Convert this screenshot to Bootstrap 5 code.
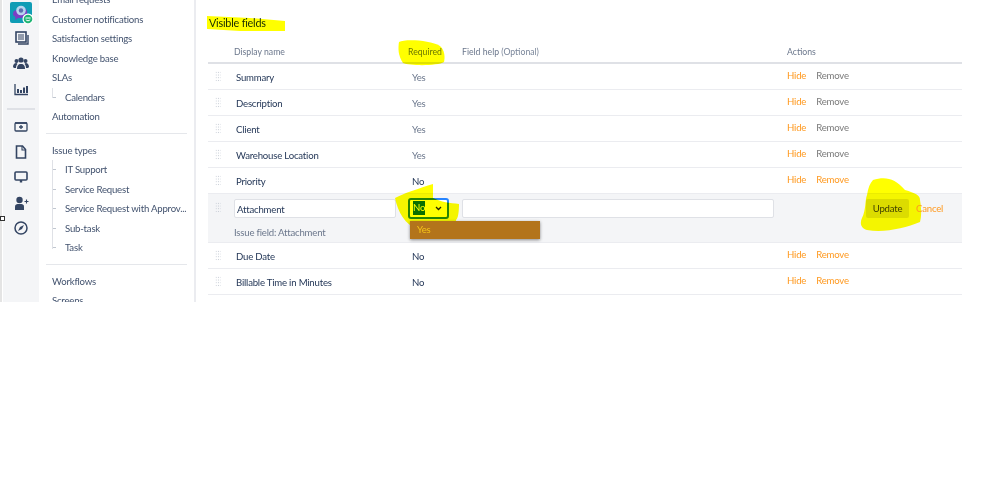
<!DOCTYPE html>
<html lang="en"><head><meta charset="utf-8"><title>Visible fields</title>
<link href="https://cdn.jsdelivr.net/npm/bootstrap@5.3.0/dist/css/bootstrap.min.css" rel="stylesheet">
<style>
html,body{background:#fff;margin:0}
body{font-family:Lato,"Noto Sans",sans-serif;font-size:9.6px;letter-spacing:-.2px;color:#172b4d;overflow:hidden}
.app-frame{height:302px;overflow:hidden;position:relative;padding-left:1px;border-left:2px solid #e4e4e4}
.rail{width:36px;background:#f4f5f7;flex:none;color:#344563;padding-top:2px}
.rail-logo{width:22px;height:22px;position:relative;flex:none;margin-bottom:6px}
.rail-ico{width:16px;height:16px;display:block;margin-bottom:9.3px;flex:none}
.rail-sep{width:28px;height:2px;background:#dfe1e6;margin:2px 0 9px}
.side-nav{width:157px;flex:none;border-right:2px solid #ebecf0;margin-top:-10px;padding:0 7px 0 13px}
.nav-line{height:19.5px;line-height:19.5px;color:#42526e;white-space:nowrap}
.nav-sub{padding-left:13px;position:relative;white-space:nowrap}
.nav-sub::before{content:"";position:absolute;left:0;top:9px;width:4px;height:1px;background:#c1c7d0}
.nav-tree{position:relative}
.nav-tree::after{content:"";position:absolute;left:0;top:0;bottom:9px;width:1px;background:#dfe1e6}
.nav-rule{height:1px;background:#e5e7eb;margin:6.500px 0 6.500px -6px}
.main-area{flex:1;padding:0 37px 0 12px;min-width:0}
.page-title{font-size:10.8px;line-height:16px;margin:15px 0 12px 1px;font-weight:400;color:#172b4d}
.field-table{table-layout:fixed;width:754px;margin:0;border-collapse:collapse}
.field-table th{font-size:8.7px;font-weight:400;letter-spacing:0;color:#6b778c;height:20px;padding:0 0 4px;line-height:12px;border-bottom:2px solid #dfe1e6;background:none}
.field-table td{height:26px;padding:4px 0 0;border-bottom:1.6px solid #ebecf0;font-size:9.6px;vertical-align:middle;background:none;color:#253858}
.w-drag{width:26px}.w-name{width:174px}.w-req{width:54px}.w-help{width:325px}
.name-cell{padding-left:2px!important}
.soft{color:#6b778c!important}
.opt-note{color:#7a869a}
.grip{display:block;width:6px;height:11px;margin-left:7px;margin-top:-4px;background-image:radial-gradient(#c1c7d0 .7px,transparent .8px);background-size:2.4px 2.7px}
.act-hide{color:#ff991f;margin-right:10px}
.act-remove{color:#7a7a7a}
.act-orange{color:#ff991f}
.row-acts{padding-top:0!important}
.edit-row td{background:#f4f5f7;height:49px;vertical-align:top;padding-top:5px}
.edit-row .grip{margin-top:3px}
.name-input{width:162px;height:19px;background:#fff;border:1px solid #dfe1e6;border-radius:2px;padding:0 2px;line-height:19px;color:#253858}
.help-input{width:312px;height:19px;background:#fff;border:1px solid #dfe1e6;border-radius:2px}
.issue-note{color:#6b778c;margin-top:8px;line-height:13px}
.fake-select{width:41px;height:21px;border:2px solid #2684ff;border-radius:3px;background:#fff;padding-left:3px;line-height:14px;position:relative;margin-top:-1px}
.sel-no{background:#0a6ed1;color:#fff;display:inline-block;height:14px;width:12px;text-align:center;margin-top:1px}
.sel-caret{position:absolute;right:5px;top:6px;width:7px;height:5px}
.drop-list{position:absolute;left:408px;top:221px;width:130px;height:18px;background:#b3741b;color:#f5c518;box-shadow:0 1px 3px rgba(0,0,0,.45);padding-left:7px;line-height:18px;z-index:3}
.btn-update{position:absolute;left:864px;top:199px;width:43px;height:19px;background:#dcdc00;border-radius:2px;color:#414100;text-align:center;line-height:20px;z-index:1}
.act-cancel{position:absolute;left:914px;top:199px;line-height:20px;color:#ff991f;z-index:3}
.marker-layer{position:absolute;left:-2px;top:0;width:999px;height:488px;mix-blend-mode:multiply;z-index:2;pointer-events:none}
.side-pin{position:absolute;left:0;top:216px;width:5px;height:5px;border:1px solid #333;background:#fff;z-index:3}
</style></head>
<body>
<div class="app-frame d-flex">
  <div class="rail d-flex flex-column align-items-center">
    <div class="rail-logo">
      <svg width="26" height="24" viewBox="0 0 26 24"><rect width="22" height="21" rx="2" fill="#0f9cb5"/><path d="M3 12c0-3 2-4 4-4 2-3 9-3 10 1 1 4-2 7-6 7H8l-3 2 .5-3C4 14 3 13.500 3 12z" fill="#7b3fc4"/><circle cx="11" cy="8.500" r="4.800" fill="#b7d6ee"/><circle cx="11" cy="8.500" r="2.200" fill="#5a6fb0"/><circle cx="18" cy="17" r="5.500" fill="#fff"/><circle cx="18" cy="17" r="4.300" fill="#1fb574"/><path d="M15.500 16h5" stroke="#fff" stroke-width="1"/><path d="M15.800 17.500c1 1.700 3.400 1.700 4.400 0" fill="none" stroke="#fff" stroke-width="1"/></svg>
    </div>
    <svg class="rail-ico" viewBox="0 0 16 16" fill="none" stroke="#344563"><rect x="3" y="2" width="10" height="10" stroke-width="1.6"/><path d="M5 5h6M5 7h6M5 9h6" stroke-width="1"/><path d="M15 5v9H5" stroke-width="1.4"/></svg>
    <svg class="rail-ico" viewBox="0 0 16 16" fill="#344563"><circle cx="8" cy="5" r="2.600"/><circle cx="3.500" cy="6" r="2"/><circle cx="12.500" cy="6" r="2"/><path d="M4 14c0-3 1-5 4-5s4 2 4 5z"/><path d="M0 12c0-2 1-4 3.500-4l1 1C3.500 10 3 11.500 3 13H1zM16 12c0-2-1-4-3.500-4l-1 1c1 1 1.500 2.500 1.500 4h2z"/></svg>
    <svg class="rail-ico" viewBox="0 0 16 16" fill="#344563"><path d="M2 3v10.500h13" fill="none" stroke="#344563" stroke-width="1.300"/><rect x="4" y="8" width="2" height="4"/><rect x="7" y="9" width="2" height="3"/><rect x="10" y="6.500" width="2" height="5.500"/><rect x="13" y="5" width="2" height="7"/></svg>
    <div class="rail-sep"></div>
    <svg class="rail-ico" viewBox="0 0 16 16" fill="none" stroke="#344563"><rect x="2" y="4" width="12" height="8" rx="1" stroke-width="1.300"/><path d="M2 4h12" stroke-width="1.600"/><path d="M8 6v4M6 8h4" stroke-width="1.300"/></svg>
    <svg class="rail-ico" viewBox="0 0 16 16" fill="none" stroke="#344563" stroke-width="1.600"><path d="M3.500 2h6l3 3.500V14h-9z"/><path d="M9 2v4h3.500" stroke-width="1.100"/></svg>
    <svg class="rail-ico" viewBox="0 0 16 16" fill="none" stroke="#344563"><rect x="2" y="3" width="12" height="8" rx="1" stroke-width="1.600"/><path d="M8 11v2.500" stroke-width="2.400"/></svg>
    <svg class="rail-ico" viewBox="0 0 16 16" fill="#344563"><circle cx="6.500" cy="5" r="3.200"/><path d="M2 15v-3.500C2 9.500 3.500 9 6.500 9s4.500.5 4.500 2.500V15z"/><path d="M11.500 6.500h4M13.500 4.500v4" stroke="#344563" stroke-width="1.100"/></svg>
    <svg class="rail-ico" viewBox="0 0 16 16"><circle cx="8" cy="8" r="6" fill="none" stroke="#344563" stroke-width="1.500"/><path d="M11 5 9 9 5 11l2-4z" fill="#344563"/></svg>
  </div>
  <nav class="side-nav">
    <div class="nav-line">Email requests</div>
    <div class="nav-line">Customer notifications</div>
    <div class="nav-line">Satisfaction settings</div>
    <div class="nav-line">Knowledge base</div>
    <div class="nav-line">SLAs</div>
    <div class="nav-tree"><div class="nav-line nav-sub">Calendars</div></div>
    <div class="nav-line">Automation</div>
    <div class="nav-rule"></div>
    <div class="nav-line">Issue types</div>
    <div class="nav-tree">
      <div class="nav-line nav-sub">IT Support</div>
      <div class="nav-line nav-sub">Service Request</div>
      <div class="nav-line nav-sub">Service Request with Approv...</div>
      <div class="nav-line nav-sub">Sub-task</div>
      <div class="nav-line nav-sub">Task</div>
    </div>
    <div class="nav-rule"></div>
    <div class="nav-line">Workflows</div>
    <div class="nav-line">Screens</div>
  </nav>
  <main class="main-area">
    <h2 class="page-title">Visible fields</h2>
    <table class="table field-table">
      <thead><tr><th class="w-drag"></th><th class="w-name">Display name</th><th class="w-req">Required</th><th class="w-help">Field help <span class="opt-note">(Optional)</span></th><th>Actions</th></tr></thead>
      <tbody>
        <tr><td><span class="grip"></span></td><td class="name-cell">Summary</td><td class="soft ps-1">Yes</td><td></td><td class="row-acts"><span class="act-hide">Hide</span><span class="act-remove">Remove</span></td></tr>
        <tr><td><span class="grip"></span></td><td class="name-cell">Description</td><td class="soft ps-1">Yes</td><td></td><td class="row-acts"><span class="act-hide">Hide</span><span class="act-remove">Remove</span></td></tr>
        <tr><td><span class="grip"></span></td><td class="name-cell">Client</td><td class="soft ps-1">Yes</td><td></td><td class="row-acts"><span class="act-hide">Hide</span><span class="act-remove">Remove</span></td></tr>
        <tr><td><span class="grip"></span></td><td class="name-cell">Warehouse Location</td><td class="soft ps-1">Yes</td><td></td><td class="row-acts"><span class="act-hide">Hide</span><span class="act-remove">Remove</span></td></tr>
        <tr><td><span class="grip"></span></td><td class="name-cell">Priority</td><td class="ps-1">No</td><td></td><td class="row-acts"><span class="act-hide">Hide</span><span class="act-orange">Remove</span></td></tr>
        <tr class="edit-row"><td><span class="grip"></span></td><td><div class="name-input">Attachment</div><div class="issue-note">Issue field: Attachment</div></td><td><div class="fake-select"><span class="sel-no">No</span><svg class="sel-caret" viewBox="0 0 7 5"><path d="M1 1l2.500 2.500L6 1" fill="none" stroke="#222" stroke-width="1.300"/></svg></div></td><td><div class="help-input"></div></td><td></td></tr>
        <tr><td><span class="grip"></span></td><td class="name-cell">Due Date</td><td class="ps-1">No</td><td></td><td class="row-acts"><span class="act-hide">Hide</span><span class="act-orange">Remove</span></td></tr>
        <tr><td><span class="grip"></span></td><td class="name-cell">Billable Time in Minutes</td><td class="ps-1">No</td><td></td><td class="row-acts"><span class="act-hide">Hide</span><span class="act-orange">Remove</span></td></tr>
      </tbody>
    </table>
  </main>
  <div class="btn-update">Update</div>
  <div class="act-cancel">Cancel</div>
  <div class="drop-list">Yes</div>
  <svg class="marker-layer" viewBox="0 0 999 488">
    <path d="M207 16 250 18 285 21 285 31 240 31 207 29z" fill="#ff0"/>
    <path d="M399 42C405 39 430 40 440 46 445 50 445 58 444 62 438 66 410 66 403 63 398 56 398 48 399 42z" fill="#ff0"/>
    <path d="M433 184C420 188 402 194 395 198 398 212 405 225 418 229 430 231 448 230 456 226 457 223 456 222 456 220 459 218 459 206 459 204 450 203 441 202 433 198z" fill="#ff0"/>
    <path d="M873 180C885 176 895 178 905 190 915 193 920 195 920 200 922 212 921 218 920 222 905 228 885 233 867 230 860 228 860 222 862 218 866 210 865 200 867 195 868 188 870 183 873 180z" fill="#ff0"/>
  </svg>
</div>
<span class="side-pin"></span>
<script src="https://cdn.jsdelivr.net/npm/bootstrap@5.3.0/dist/js/bootstrap.bundle.min.js"></script>
</body></html>
